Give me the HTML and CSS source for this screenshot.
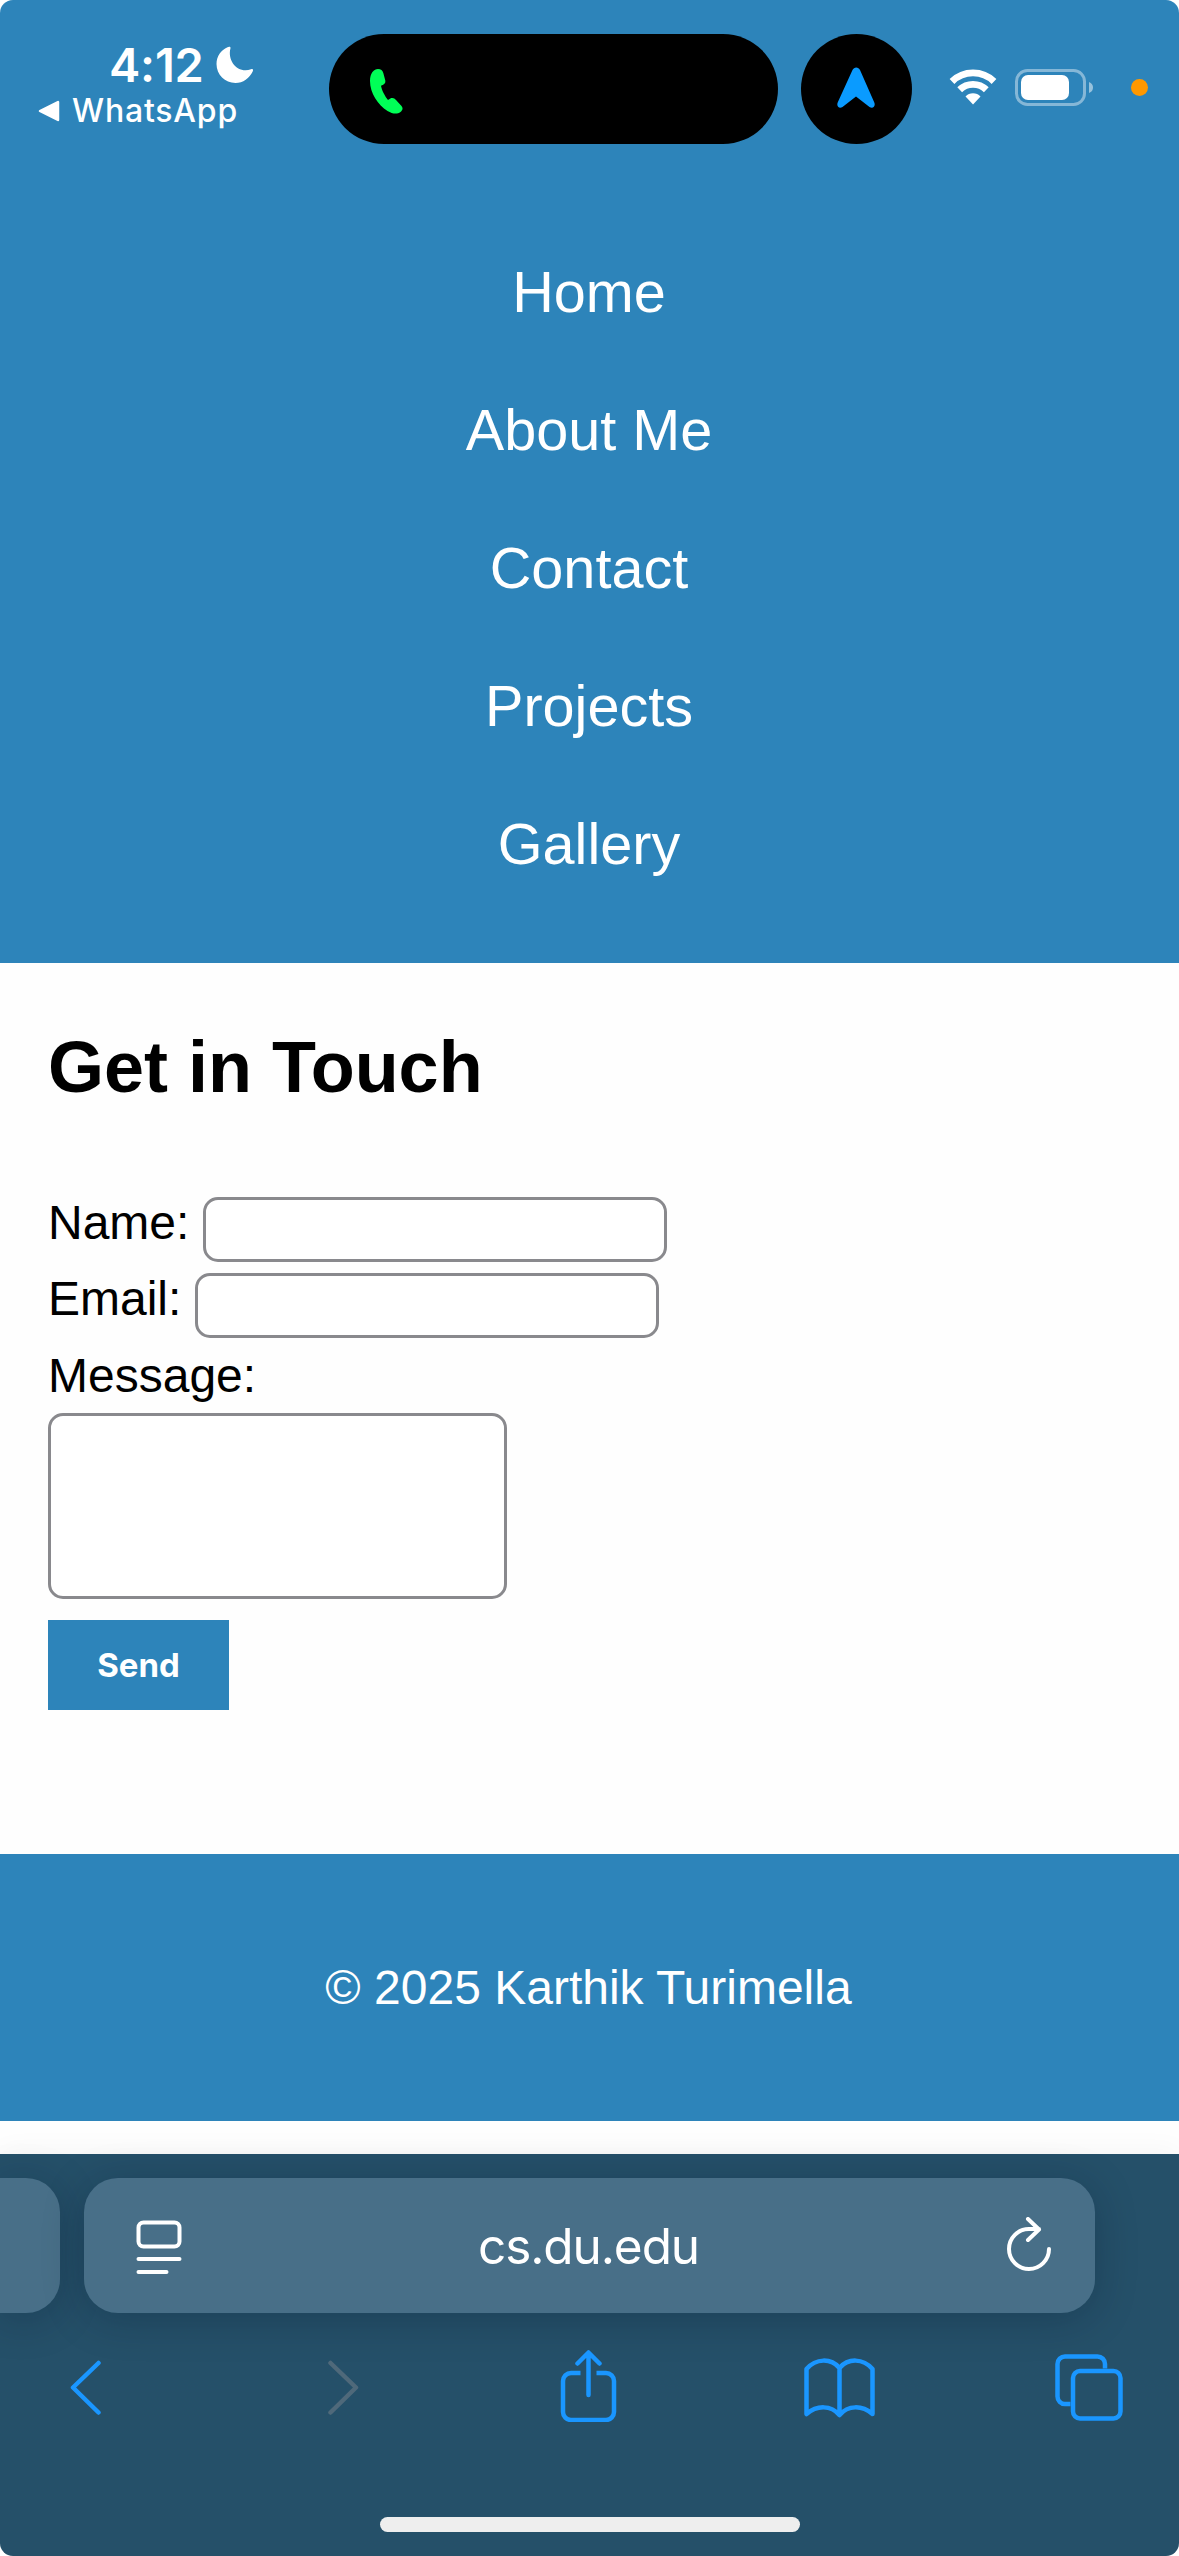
FILE: index.html
```html
<!DOCTYPE html>
<html lang="en">
<head>
<meta charset="utf-8">
<title>Contact</title>
<link rel="stylesheet" href="styles.css">
</head>
<body>
<div class="screen">
  <header class="site-header">
    <div class="status-bar">
      <div class="status-left">
        <div class="clock">
          <span class="time">4:12</span>
          <svg class="moon" width="38" height="38" viewBox="0 0 38 38"><path d="M11.5 1.3C12.6.3 14.8.3 14.5 2.2 11 15 22 28 35 23.300 37 22.600 37.500 23.800 36.800 25.300 33.500 32.500 27 37 19.500 37 9 37 .5 28.500.5 18 .5 10.500 5 4 11.500 1.300Z" fill="#fff"/></svg>
        </div>
        <div class="back-app">
          <svg width="22" height="22" viewBox="0 0 22 22"><path d="M20 2v18L2 11Z" fill="#fff" stroke="#fff" stroke-width="2.500" stroke-linejoin="round"/></svg>
          <span>WhatsApp</span>
        </div>
      </div>
      <div class="island">
        <svg width="34" height="46" viewBox="0 0 34 46"><path d="M0 12C0 4 4 0 8 0c3 0 4.500 1.200 5.300 4l2 7.500c.5 2.500-.8 3.800-4.300 5.200.8 4.800 4 10.500 7 14.300 3.500-3 6-2.500 8 0l5.500 6c2 2.500.8 4.500-1 6-3.500 2.500-8 2-13-1C8 36 0 24 0 12Z" fill="#00ff57"/></svg>
      </div>
      <div class="island-dot">
        <svg width="38" height="41" viewBox="0 0 38 41"><path d="M15.500 3C17-.5 21.500-.5 23 3L37.300 35.500c1.500 4-1.500 6.500-4.800 4.500L19 29.500 5.500 40C2.200 42-.8 39.500.7 35.500Z" fill="#0a9bff"/></svg>
      </div>
      <svg class="wifi" width="48" height="36" viewBox="0 0 48 36" fill="none" stroke="#fff" stroke-width="6.800"><path d="M3 12.500a30 30 0 0 1 42 0"/><path d="M10.700 20.800a19 19 0 0 1 26.600 0"/><path d="M16.500 27.500a10.500 10.500 0 0 1 15 0L24 35.500Z" fill="#fff" stroke="none"/></svg>
      <svg class="battery" width="78" height="38" viewBox="0 0 78 38"><rect x="1.500" y="1.500" width="68" height="34" rx="11" fill="none" stroke="#fff" stroke-opacity=".42" stroke-width="3"/><rect x="6" y="6" width="48" height="25" rx="7" fill="#fff"/><path d="M74 13q4 1.500 4 5.500t-4 5.500Z" fill="#fff" fill-opacity=".5"/></svg>
      <span class="mic-dot"></span>
    </div>
    <nav class="nav">
      <a>Home</a>
      <a>About Me</a>
      <a>Contact</a>
      <a>Projects</a>
      <a>Gallery</a>
    </nav>
  </header>

  <main class="content">
    <h1>Get in Touch</h1>
    <form class="form">
      <div class="row"><label for="name">Name:</label><input id="name" type="text"></div>
      <div class="row"><label for="email">Email:</label><input id="email" type="text"></div>
      <div class="row"><label for="message">Message:</label></div>
      <textarea id="message"></textarea>
      <button type="button">Send</button>
    </form>
  </main>

  <footer class="site-footer">© 2025 Karthik Turimella</footer>

  <section class="browser">
    <div class="address-row">
      <div class="tab-previous"></div>
      <div class="address">
        <svg width="46" height="54" viewBox="0 0 46 54" fill="none" stroke="#fff" stroke-width="4" stroke-linecap="round"><rect x="2.500" y="2.500" width="41" height="24" rx="5"/><path d="M2.500 39h41M2.500 52h28"/></svg>
        <span>cs.du.edu</span>
        <svg class="reload" width="44" height="54" viewBox="0 0 44 54" fill="none" stroke="#fff" stroke-width="4" stroke-linecap="round" stroke-linejoin="round"><path d="M42 32a20 20 0 1 1-20-20h10M21 2l11 10.500-11 10.500"/></svg>
      </div>
    </div>
    <div class="toolbar">
      <span class="tool"><svg width="31" height="55" viewBox="0 0 31 55"><path d="M28.500 3 3 27.500 28.500 52.500"/></svg></span>
      <span class="tool"><svg class="disabled" width="31" height="55" viewBox="0 0 31 55"><path d="M2.500 3 28 27.500 2.500 52.500"/></svg></span>
      <span class="tool share"><svg width="57" height="72" viewBox="0 0 57 72"><path d="M28.500 45V3M17.500 13.500l11-11 11 11"/><path class="butt" d="M20.500 23H11a8 8 0 0 0-8 8v31a8 8 0 0 0 8 8h35a8 8 0 0 0 8-8V31a8 8 0 0 0-8-8h-9.500"/></svg></span>
      <span class="tool"><svg width="71" height="60" viewBox="0 0 71 60"><path d="M2.500 56V11C12 0 27 0 35.500 10 44 0 59 0 68.500 11V56C58 47 44 47 35.500 57 27 47 13 47 2.500 56ZM35.500 10V57"/></svg></span>
      <span class="tool"><svg width="68" height="67" viewBox="0 0 68 67"><rect x="18" y="17" width="47.500" height="47.500" rx="7"/><path class="butt" d="M15.500 50H10a7.500 7.500 0 0 1-7.500-7.500V10A7.500 7.500 0 0 1 10 2.500H42.500A7.500 7.500 0 0 1 50 10v4.500"/></svg></span>
    </div>
    <div class="home-indicator"></div>
  </section>
</div>
</body>
</html>
```

FILE: styles.css
```css
* {
  box-sizing: border-box;
}

body {
  margin: 0;
  background: #fff;
  font-family: "Liberation Sans", Arial, sans-serif;
  color: #000;
}

svg {
  display: block;
  flex: none;
}

.screen {
  display: flex;
  flex-direction: column;
  width: 1179px;
  height: 2556px;
  border-radius: 13px;
  overflow: hidden;
  background: #fefefe;
}

.site-header {
  height: 963px;
  background: #2d84ba;
}

.status-bar {
  display: flex;
  align-items: flex-start;
  height: 177px;
  color: #fff;
  font-family: Inter, sans-serif;
}

.status-left {
  width: 329px;
  padding: 39px 0 0 38px;
}

.clock {
  display: flex;
  align-items: center;
  gap: 12px;
  height: 52px;
  padding-left: 71px;
}

.time {
  font-size: 47px;
  font-weight: 600;
  line-height: 52px;
  letter-spacing: -.2px;
}

.back-app {
  display: flex;
  align-items: center;
  gap: 12px;
  height: 40px;
  font-size: 32px;
  font-weight: 500;
  line-height: 40px;
  letter-spacing: .8px;
}

.island {
  display: flex;
  align-items: center;
  width: 449px;
  height: 110px;
  margin-top: 34px;
  padding: 5px 0 0 41px;
  border-radius: 55px;
  background: #000;
}

.island-dot {
  display: flex;
  align-items: center;
  justify-content: center;
  width: 111px;
  height: 110px;
  margin: 34px 0 0 23px;
  padding: 0 2px 4px 0;
  border-radius: 50%;
  background: #000;
}

.wifi {
  margin: 69px 0 0 37px;
}

.battery {
  margin: 69px 0 0 18px;
}

.mic-dot {
  width: 17px;
  height: 17px;
  margin: 79px 0 0 38px;
  border-radius: 50%;
  background: #ff9800;
}

.nav {
  display: flex;
  flex-direction: column;
  align-items: center;
  padding: 46px 1px 0 0;
  color: #fff;
  font-size: 57.600px;
  line-height: 138px;
}

.content {
  height: 891px;
  padding: 47px 48px 0;
  font-size: 48px;
}

h1 {
  margin: 0 0 71px;
  font-size: 72px;
  line-height: 115px;
}

.form {
  display: flex;
  flex-direction: column;
  align-items: flex-start;
}

.row {
  display: flex;
  gap: 14px;
  height: 76.400px;
  line-height: 54px;
}

.row input {
  width: 464px;
  height: 65px;
  margin-top: 1px;
}

input,
textarea {
  padding: 0;
  border: 3px solid #89898d;
  border-radius: 15px;
  background: #fff;
}

textarea {
  width: 459px;
  height: 186px;
  margin-bottom: 21px;
  margin-top: -12px;
  resize: none;
}

button {
  width: 181px;
  height: 90px;
  padding: 0;
  border: 0;
  background: #2d84ba;
  color: #fff;
  font: 700 33px/91px Inter, sans-serif;
}

.site-footer {
  height: 267px;
  padding-right: 2px;
  background: #2d84ba;
  color: #fff;
  font-size: 48px;
  line-height: 267px;
  text-align: center;
}

.browser {
  display: flex;
  flex-direction: column;
  flex: none;
  height: 402px;
  margin-top: 33px;
  padding-top: 24px;
  background: #255069;
  box-shadow: 0 -6px 24px rgba(0, 0, 0, .03);
}

.address-row {
  display: flex;
  gap: 24px;
  height: 135px;
}

.tab-previous,
.address {
  background: #486f88;
  box-shadow: 0 6px 40px rgba(0, 20, 40, .25);
}

.tab-previous {
  width: 60px;
  border-radius: 0 34px 34px 0;
}

.address {
  display: grid;
  grid-template-columns: 46px 1fr 44px;
  align-items: center;
  width: 1011px;
  padding: 0 44px 0 52px;
  border-radius: 34px;
  color: #fff;
  font: 400 49.500px/137px Inter, sans-serif;
  letter-spacing: -1.100px;
  text-align: center;
}

.address span {
  padding-right: 12px;
}

.reload {
  margin-top: -5px;
}

.toolbar {
  display: grid;
  grid-template-columns: repeat(5, 251px);
  justify-content: center;
  align-items: center;
  height: 150px;
  padding: 0 2px 1px 0;
}

.tool {
  display: flex;
  justify-content: center;
}

.tool:first-child {
  padding-right: 2px;
}

.tool:nth-child(2) {
  padding-left: 12px;
}

.tool:last-child {
  padding-right: 4px;
}

.share {
  padding-bottom: 3px;
}

.toolbar svg {
  fill: none;
  stroke: #1a96ff;
  stroke-width: 4.500;
  stroke-linecap: round;
  stroke-linejoin: round;
}

.toolbar .disabled {
  stroke: #4f697a;
}

.toolbar .butt {
  stroke-linecap: butt;
}

.home-indicator {
  width: 420px;
  height: 15px;
  margin: 54px 0 0 380px;
  border-radius: 8px;
  background: #eee;
}
```
